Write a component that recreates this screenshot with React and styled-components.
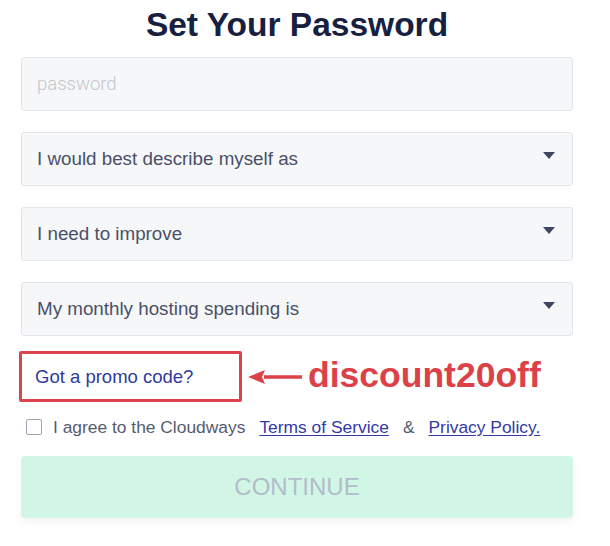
import React from "react";
import styled, { createGlobalStyle } from "styled-components";

const Global = createGlobalStyle`
  html, body { margin: 0; padding: 0; background: #ffffff; }
  body { font-family: "Liberation Sans", Arial, sans-serif; }
`;

const Page = styled.div`
  width: 610px;
  height: 546px;
  padding: 0 37px 0 21px;
  box-sizing: border-box;
  display: flex;
  flex-direction: column;
`;

const Title = styled.h1`
  margin: 5px 0 0;
  font-size: 33.5px;
  line-height: 40px;
  font-weight: 700;
  color: #17213f;
  text-align: center;
  padding-right: 0;
`;

const Fields = styled.div`
  margin-top: 12px;
  display: flex;
  flex-direction: column;
  gap: 21px;
`;

const Field = styled.div`
  height: 54px;
  box-sizing: border-box;
  background: #f6f7f9;
  border: 1px solid #e2e5ea;
  border-radius: 3px;
  display: flex;
  align-items: center;
  justify-content: space-between;
  padding: 0 17px 0 15px;
  font-size: ${(p) => (p.$placeholder ? "18.5px" : "18.8px")};
  color: ${(p) => (p.$placeholder ? "#c3c6cd" : "#4a5068")};
  font-family: ${(p) =>
    p.$placeholder ? "Roboto, sans-serif" : '"Liberation Sans", Arial, sans-serif'};
  font-weight: ${(p) => (p.$placeholder ? 300 : 400)};
`;

const Caret = styled.span`
  width: 0;
  height: 0;
  border-left: 6px solid transparent;
  border-right: 6px solid transparent;
  border-top: 7px solid #3d4560;
  margin-top: -7px;
`;

const PromoRow = styled.div`
  margin-top: 15px;
  margin-left: -2px;
  display: flex;
  align-items: center;
`;

const PromoBox = styled.div`
  width: 223px;
  height: 51px;
  box-sizing: border-box;
  border: 3px solid #dd434c;
  border-radius: 2px;
  display: flex;
  align-items: center;
  padding-left: 13px;
  font-size: 18.5px;
  color: #2f3a9c;
`;

const Arrow = styled.svg`
  margin-left: 6px;
  flex: none;
`;

const Code = styled.span`
  margin-left: 6px;
  font-size: 35.5px;
  font-weight: 700;
  color: #dc4148;
  font-family: "Liberation Sans", Arial, sans-serif;
  margin-top: -2px;
`;

const AgreeRow = styled.div`
  margin-top: 13px;
  height: 24px;
  display: flex;
  align-items: center;
  padding-left: 5px;
  font-size: 17.4px;
  color: #555b6e;
`;

const Check = styled.span`
  width: 16px;
  height: 16px;
  box-sizing: border-box;
  border: 1.5px solid #9ea3ae;
  border-radius: 2px;
  margin-right: 11px;
  flex: none;
`;

const Link = styled.a`
  color: #3438a8;
  text-decoration: underline;
  text-underline-offset: 2px;
  margin: 0 ${(p) => p.$gap || 0}px;
`;

const Button = styled.button`
  margin-top: 17px;
  height: 62px;
  width: 100%;
  border: none;
  border-radius: 4px;
  background: #d2f6e5;
  color: #b2bccb;
  font-family: "Liberation Sans", Arial, sans-serif;
  font-size: 24px;
  box-shadow: 0 4px 8px rgba(0, 0, 0, 0.05);
  cursor: default;
`;

export default function App() {
  return (
    <>
      <Global />
      <Page>
        <Title>Set Your Password</Title>
        <Fields>
          <Field $placeholder>password</Field>
          <Field>
            I would best describe myself as
            <Caret />
          </Field>
          <Field>
            I need to improve
            <Caret />
          </Field>
          <Field>
            My monthly hosting spending is
            <Caret />
          </Field>
        </Fields>
        <PromoRow>
          <PromoBox>Got a promo code?</PromoBox>
          <Arrow width="54" height="16" viewBox="0 0 54 16">
            <path d="M16 8 H54" stroke="#dc4148" strokeWidth="3.5" />
            <path d="M0 8 L17 1 L14 8 L17 15 Z" fill="#dc4148" />
          </Arrow>
          <Code>discount20off</Code>
        </PromoRow>
        <AgreeRow>
          <Check />
          I agree to the Cloudways
          <Link $gap={14}>Terms of Service</Link>&amp;
          <Link $gap={14}>Privacy Policy.</Link>
        </AgreeRow>
        <Button>CONTINUE</Button>
      </Page>
    </>
  );
}
